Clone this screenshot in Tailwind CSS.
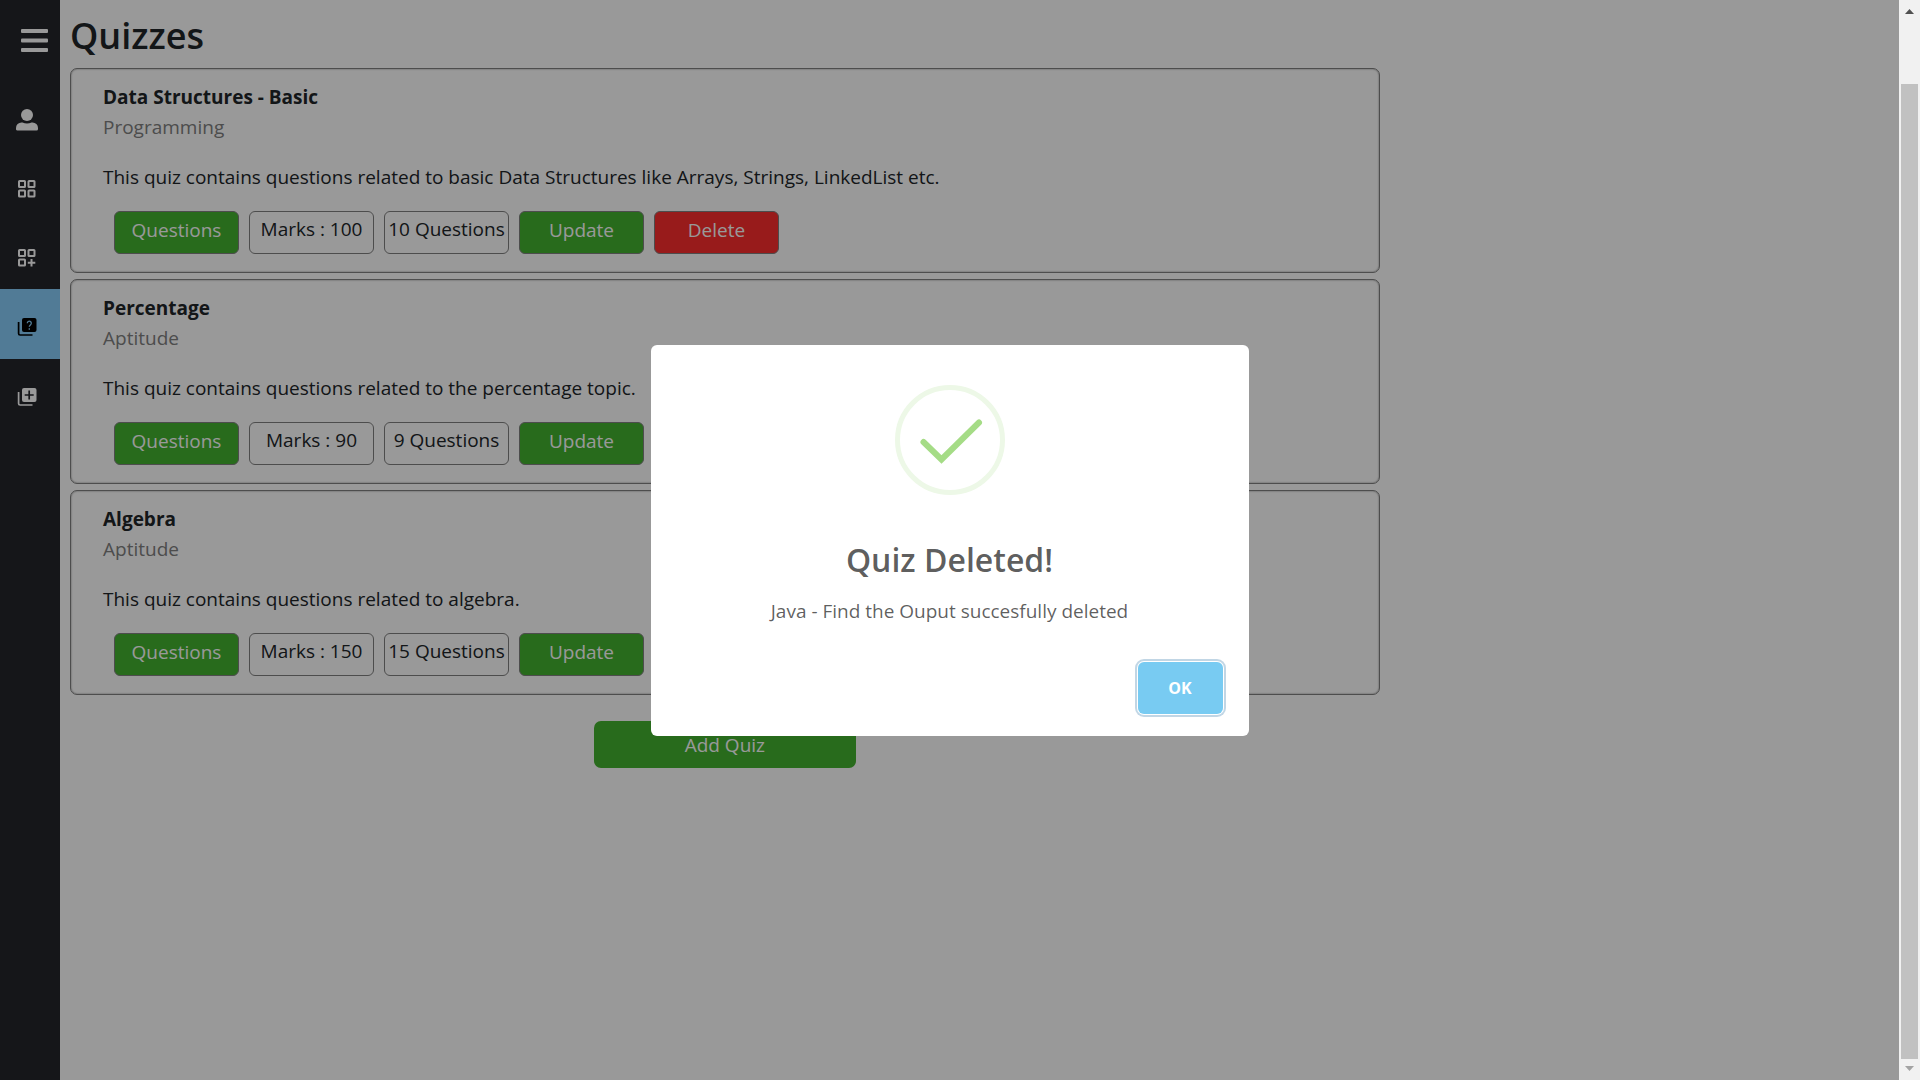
<!DOCTYPE html>
<html lang="en">
<head>
<meta charset="utf-8">
<title>Quizzes</title>
<script src="https://cdn.jsdelivr.net/npm/@tailwindcss/browser@4"></script>
</head>
<body class="flex h-screen overflow-hidden bg-white font-['Segoe_UI','Open_Sans',sans-serif] text-[19px] leading-[30px] text-[#212529]">
<div class="relative flex min-w-0 flex-1">
  <nav class="flex w-[60px] shrink-0 flex-col bg-[#23252b] text-white" aria-label="Main">
    <button class="flex h-[82px] items-start pt-7 pl-[21px]" aria-label="Toggle menu">
      <svg class="h-[26px] w-[27px]" viewBox="0 0 27 26" fill="currentColor"><rect y="1" width="27" height="4" rx="1"/><rect y="10.500" width="27" height="4" rx="1"/><rect y="20" width="27" height="4" rx="1"/></svg>
    </button>
    <a href="#profile" aria-label="Profile" class="flex h-[69px] items-center pt-1.5 pl-[15px]"><svg class="size-6" viewBox="0 0 24 24" fill="currentColor"><circle cx="12" cy="7" r="6"/><path d="M1 22.500v-2.500a5.500 5.500 0 0 1 5.500-5.500h1c2.800 1.300 6.200 1.300 9 0h1a5.500 5.500 0 0 1 5.500 5.500v1a1.500 1.500 0 0 1-1.500 1.500h-19a1.500 1.500 0 0 1-1.500-1z"/></svg></a>
    <a href="#categories" aria-label="Categories" class="flex h-[69px] items-center pt-1.5 pl-[15px]"><svg class="size-6" viewBox="0 0 24 24" fill="none" stroke="currentColor" stroke-width="2"><rect x="4" y="4" width="6" height="6" rx=".6"/><rect x="13.500" y="4" width="6" height="6" rx=".6"/><rect x="4" y="13.500" width="6" height="6" rx=".6"/><rect x="13.500" y="13.500" width="6" height="6" rx=".6"/></svg></a>
    <a href="#add-category" aria-label="Add category" class="flex h-[69px] items-center pt-1.5 pl-[15px]"><svg class="size-6" viewBox="0 0 24 24" fill="none" stroke="currentColor" stroke-width="2"><rect x="4" y="4" width="6" height="6" rx=".6"/><rect x="13.500" y="4" width="6" height="6" rx=".6"/><rect x="4" y="13.500" width="6" height="6" rx=".6"/><path d="M16.500 13v7.500M12.800 16.700h7.500"/></svg></a>
    <a href="#quizzes" aria-label="Quizzes" aria-current="page" class="flex h-[70px] items-center bg-[#87cefa] pt-1.5 pl-[15px] text-black"><svg class="size-6" viewBox="0 0 24 24"><rect x="7" y="3" width="14.500" height="14" rx="2" fill="currentColor"/><path d="M3.600 7v11.500a1.500 1.500 0 0 0 1.500 1.500h12.400" fill="none" stroke="currentColor" stroke-width="1.700"/><path d="M12.300 8.200a2 2 0 1 1 3.300 1.500c-.8.700-1.300 1-1.300 2.100M14.300 13.200v1.500" fill="none" stroke="#87cefa" stroke-width="1.300"/></svg></a>
    <a href="#add-quiz" aria-label="Add quiz" class="flex h-[69px] items-center pt-1.5 pl-[15px]"><svg class="size-6" viewBox="0 0 24 24"><rect x="7" y="3" width="14.500" height="14" rx="2" fill="currentColor"/><path d="M3.600 7v11.500a1.500 1.500 0 0 0 1.500 1.500h12.400" fill="none" stroke="currentColor" stroke-width="1.700"/><path d="M14.200 5.500v9M9.700 10h9" fill="none" stroke="#23252b" stroke-width="1.700"/></svg></a>
  </nav>

  <main class="min-w-0 flex-1 px-[10px]">
    <div class="flex w-[72%] flex-col">
      <h1 class="pt-3 pb-2 text-[36px] leading-[48px] font-semibold">Quizzes</h1>
      <div class="flex flex-col gap-[6px]">
        <article class="h-[205px] rounded-[7px] border border-[#808080] px-8 pt-[13px] shadow-[inset_0_0_2px_gray]">
          <h2 class="font-bold">Data Structures - Basic</h2>
          <p class="text-[#808080]">Programming</p>
          <p class="mt-5">This quiz contains questions related to basic Data Structures like Arrays, Strings, LinkedList etc.</p>
          <div class="mt-[19px] flex gap-[10px] pl-[11px] text-center whitespace-nowrap">
            <button class="h-[43px] w-[125px] rounded-[6px] border border-[#808080] bg-[#44b22f] pb-1.5 text-white">Questions</button>
            <div class="h-[43px] w-[125px] rounded-[6px] border border-[#808080] pt-[2px]">Marks : 100</div>
            <div class="h-[43px] w-[125px] rounded-[6px] border border-[#808080] pt-[2px]">10 Questions</div>
            <button class="h-[43px] w-[125px] rounded-[6px] border border-[#808080] bg-[#44b22f] pb-1.5 text-white">Update</button>
            <button class="h-[43px] w-[125px] rounded-[6px] border border-[#808080] bg-[#fe2d2d] pb-1.5 text-white">Delete</button>
          </div>
        </article>
        <article class="h-[205px] rounded-[7px] border border-[#808080] px-8 pt-[13px] shadow-[inset_0_0_2px_gray]">
          <h2 class="font-bold">Percentage</h2>
          <p class="text-[#808080]">Aptitude</p>
          <p class="mt-5">This quiz contains questions related to the percentage topic.</p>
          <div class="mt-[19px] flex gap-[10px] pl-[11px] text-center whitespace-nowrap">
            <button class="h-[43px] w-[125px] rounded-[6px] border border-[#808080] bg-[#44b22f] pb-1.5 text-white">Questions</button>
            <div class="h-[43px] w-[125px] rounded-[6px] border border-[#808080] pt-[2px]">Marks : 90</div>
            <div class="h-[43px] w-[125px] rounded-[6px] border border-[#808080] pt-[2px]">9 Questions</div>
            <button class="h-[43px] w-[125px] rounded-[6px] border border-[#808080] bg-[#44b22f] pb-1.5 text-white">Update</button>
          </div>
        </article>
        <article class="h-[205px] rounded-[7px] border border-[#808080] px-8 pt-[13px] shadow-[inset_0_0_2px_gray]">
          <h2 class="font-bold">Algebra</h2>
          <p class="text-[#808080]">Aptitude</p>
          <p class="mt-5">This quiz contains questions related to algebra.</p>
          <div class="mt-[19px] flex gap-[10px] pl-[11px] text-center whitespace-nowrap">
            <button class="h-[43px] w-[125px] rounded-[6px] border border-[#808080] bg-[#44b22f] pb-1.5 text-white">Questions</button>
            <div class="h-[43px] w-[125px] rounded-[6px] border border-[#808080] pt-[2px]">Marks : 150</div>
            <div class="h-[43px] w-[125px] rounded-[6px] border border-[#808080] pt-[2px]">15 Questions</div>
            <button class="h-[43px] w-[125px] rounded-[6px] border border-[#808080] bg-[#44b22f] pb-1.5 text-white">Update</button>
          </div>
        </article>
      </div>
      <button class="mt-[26px] h-[47px] w-1/5 self-center rounded-[7px] bg-[#44b22f] text-white">Add Quiz</button>
    </div>
  </main>

  <div class="absolute inset-0 flex items-center justify-center bg-black/40">
    <section role="dialog" aria-modal="true" aria-labelledby="dialog-title" class="flex w-[598px] flex-col items-center rounded-[6px] bg-white pt-10">
      <svg class="size-[110px]" viewBox="0 0 110 110" fill="none"><circle cx="55" cy="55" r="52.500" stroke="#edf8e7" stroke-width="5"/><path d="M28.500 57 46.500 74.500 84 37.500" stroke="#a5dc86" stroke-width="6" stroke-linecap="round"/></svg>
      <h2 id="dialog-title" class="mt-[41px] text-[32px] leading-[48px] font-semibold text-black/65">Quiz Deleted!</h2>
      <p class="mt-3 text-[19px] text-black/64">Java - Find the Ouput succesfully deleted</p>
      <div class="flex w-full justify-end pt-9 pr-[26px] pb-[22px]">
        <button class="h-[52px] w-[85px] rounded-[6px] bg-[#78cbf2] text-[16px] font-bold text-white shadow-[0_0_0_1px_#fff,0_0_0_3px_rgba(43,114,165,0.29)]">OK</button>
      </div>
    </section>
  </div>
</div>

<div class="flex w-[21px] shrink-0 flex-col items-center bg-[#f1f1f1]" aria-hidden="true">
  <svg class="mt-[9px] h-[5px] w-[9px]" viewBox="0 0 9 5" fill="#505050"><path d="M4.500 0 9 5H0z"/></svg>
  <div class="mt-[70px] mb-[7px] w-[17px] flex-1 bg-[#c1c1c1]"></div>
  <svg class="mb-[9px] h-[5px] w-[9px]" viewBox="0 0 9 5" fill="#a3a3a3"><path d="M0 0h9L4.500 5z"/></svg>
</div>
</body>
</html>
